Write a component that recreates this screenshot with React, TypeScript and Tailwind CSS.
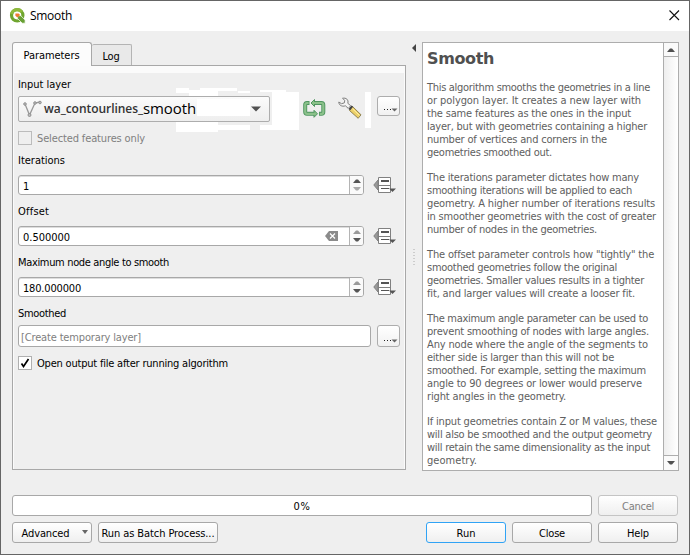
import React, { useLayoutEffect, useRef, useState } from "react";

const ui = "font-['DejaVu_Sans_Condensed','DejaVu_Sans',sans-serif]";

/* Spreads or tightens the letters of one line so that it takes the given width. */
function Fit({ text, width }: { text: string; width: number }) {
  const ref = useRef<HTMLSpanElement>(null);
  const [spacing, setSpacing] = useState(0);
  useLayoutEffect(() => {
    const el = ref.current;
    if (!el) return;
    el.style.letterSpacing = "0px";
    setSpacing((width - el.getBoundingClientRect().width) / text.length);
  }, [text, width]);
  return (
    <span ref={ref} className="inline-block whitespace-nowrap" style={{ letterSpacing: spacing + "px" }}>
      {text}
    </span>
  );
}

function Logo() {
  return (
    <svg width="18" height="18" viewBox="0 0 18 18" className="shrink-0">
      <circle cx="8.200" cy="8.300" r="5.700" fill="none" stroke="#6fa52f" strokeWidth="3.200" />
      <path d="M2.600 7A5.700 5.700 0 0 1 12.800 5" fill="none" stroke="#8fb93c" strokeWidth="3.200" />
      <path d="M8.600 8.700h3.200l4.300 4.300v3.200h-2.900L8.600 11.600z" fill="#68a034" stroke="#fff" strokeWidth=".7" />
      <path d="M6.400 6.400h3.200l1.500 1.500-2.700 2.700-2-1.800z" fill="#ef7b31" />
    </svg>
  );
}

function Arrow({ up = false, className = "" }: { up?: boolean; className?: string }) {
  return (
    <svg width="8" height="4" viewBox="0 0 8 4" className={"shrink-0 " + className} fill="currentColor">
      <path d={up ? "M0 4 3 .5h2L8 4z" : "M0 0h8L5 3.500H3z"} />
    </svg>
  );
}

function Spin({ value, width, clear = false, first = false }: { value: string; width: number; clear?: boolean; first?: boolean }) {
  return (
    <div className="flex h-[20px] shrink-0 items-center">
      <div className="flex h-[20px] w-[346px] shrink-0 overflow-hidden rounded-[3px] border border-[#a8a8a8] bg-white shadow-[inset_0_1px_0_#ddd]">
        <div className="flex-1 whitespace-nowrap pl-[4px] pt-px leading-[19px]"><Fit text={value} width={width} /></div>
        {clear && (
          <svg width="13" height="10" viewBox="0 0 13 10" className="mr-[11px] mt-[4px]">
            <path d="M0 5 4 0h9v10H4z" fill="#8b8b8b" />
            <path d="m5 2.500 5 5m0-5-5 5" stroke="#fff" strokeWidth="1.200" />
          </svg>
        )}
        <div className="flex w-[14px] flex-col items-center justify-center gap-[4px] border-l border-[#b4b4b4] bg-[#fafafa]">
          <Arrow up className={first ? "text-[#555]" : "text-[#999]"} />
          <Arrow className={first ? "text-[#aaa]" : "text-[#555]"} />
        </div>
      </div>
      <svg width="24" height="18" viewBox="0 0 24 18" className="ml-[9px]">
        <path d="M.8 9 5 4v10z" fill="#999" stroke="#808080" />
        <path d="M5.500 1.500h12v15h-12z" fill="#fff" stroke="#808080" />
        <path d="M6 9.500h11" stroke="#808080" />
        <path d="M8 5h8" stroke="#555" strokeWidth="2" />
        <path d="M8 12.500h8" stroke="#555" />
        <path d="M16 12.500h7L19.500 16z" fill="#555" />
      </svg>
    </div>
  );
}

function Dots({ className = "" }: { className?: string }) {
  return (
    <div className={"flex w-[23px] items-end justify-end rounded-[3px] border border-[#adadad] bg-gradient-to-b from-white to-[#f1f1f1] pb-[3px] pr-[1px] " + className}>
      <svg width="15" height="4" viewBox="0 0 15 4">
        <path d="M1 1h1v1H1zM4 1h1v1H4zM7 1h1v1H7z" fill="#222" />
        <path d="M8.500 .5h6l-3 3z" fill="#666" />
      </svg>
    </div>
  );
}

function Button({ children, className = "" }: { children: React.ReactNode; className?: string }) {
  return (
    <button className={"flex h-[21px] items-center justify-center whitespace-nowrap rounded-[3px] border bg-gradient-to-b from-white to-[#efefef] pt-px " + className}>
      {children}
    </button>
  );
}

const help: [string, number][][] = [
  [
    ["This algorithm smooths the geometries in a line", 223],
    ["or polygon layer. It creates a new layer with", 214],
    ["the same features as the ones in the input", 204],
    ["layer, but with geometries containing a higher", 220],
    ["number of vertices and corners in the", 180],
    ["geometries smoothed out.", 125],
  ],
  [
    ["The iterations parameter dictates how many", 212],
    ["smoothing iterations will be applied to each", 205],
    ["geometry. A higher number of iterations results", 228],
    ["in smoother geometries with the cost of greater", 229],
    ["number of nodes in the geometries.", 170],
  ],
  [
    ['The offset parameter controls how "tightly" the', 227],
    ["smoothed geometries follow the original", 190],
    ["geometries. Smaller values results in a tighter", 217],
    ["fit, and larger values will create a looser fit.", 208],
  ],
  [
    ["The maximum angle parameter can be used to", 221],
    ["prevent smoothing of nodes with large angles.", 222],
    ["Any node where the angle of the segments to", 221],
    ["either side is larger than this will not be", 187],
    ["smoothed. For example, setting the maximum", 219],
    ["angle to 90 degrees or lower would preserve", 215],
    ["right angles in the geometry.", 139],
  ],
  [
    ["If input geometries contain Z or M values, these", 230],
    ["will also be smoothed and the output geometry", 225],
    ["will retain the same dimensionality as the input", 223],
    ["geometry.", 50],
  ],
];

export default function App() {
  return (
    <div className={"relative flex h-[555px] w-[690px] flex-col overflow-hidden border border-[#656565] bg-[#efefef] text-[11px] leading-[13px] text-black " + ui}>
      <header className="flex h-[30px] shrink-0 items-center bg-white pl-[8px]">
        <Logo />
        <span className="ml-[3px] font-['Open_Sans',sans-serif] text-[12px] leading-[16px]"><Fit text="Smooth" width={42} /></span>
        <svg width="11" height="11" viewBox="0 0 11 11" className="mb-[2px] ml-auto mr-[9px]">
          <path d="m.5.500 9.500 9.500m0-9.500L.5 10" stroke="#111" strokeWidth="1.100" />
        </svg>
      </header>

      <main className="flex h-[439px] shrink-0 pl-[11px] pt-[11px]">
        <section className="flex w-[394px] shrink-0 flex-col">
          <div className="flex h-[23px] shrink-0 items-end">
            <div className="z-10 -mb-px flex h-[24px] w-[80px] items-center justify-center rounded-t-[3px] border border-b-0 border-[#a8a8a8] bg-[#fcfcfc] pr-px pt-[2px]"><Fit text="Parameters" width={56} /></div>
            <div className="flex h-[21px] w-[40px] items-center justify-center rounded-t-[2px] border border-b-0 border-l-0 border-[#b4b4b4] bg-[#e9e9e9] pr-px pt-[3px]"><Fit text="Log" width={17} /></div>
          </div>
          <div className="h-[405px] border border-[#a8a8a8]">
            <div className="h-[7px] bg-[#fbfbfb]" />
            <div className="flex h-[396px] flex-col border-x border-[#fbfbfb] px-[4px]">
              <div className="mt-[5px] h-[13px] shrink-0"><Fit text="Input layer" width={53} /></div>
              <div className="relative mt-[5px] flex h-[27px] shrink-0 items-start">
                <i className="absolute -top-[8px] left-[158px] h-[5px] w-[13px] bg-white" />
                <i className="absolute -top-[8px] left-[182px] h-[3px] w-[37px] bg-white" />
                <i className="absolute -top-[6px] left-[171px] h-[6px] w-[29px] bg-white" />
                <i className="absolute -top-[5px] left-[220px] h-[2px] w-[12px] bg-white" />
                <i className="absolute -top-[6px] left-[242px] h-[2px] w-[26px] bg-white" />
                <i className="absolute left-[158px] top-[26px] h-[10px] w-[42px] bg-white" />
                <i className="absolute left-[200px] top-[29px] h-[5px] w-[32px] bg-white" />
                <i className="absolute left-[242px] top-[29px] h-[5px] w-[14px] bg-white" />
                <i className="absolute -top-[4px] left-[254px] h-[38px] w-[27px] bg-white" />
                <i className="absolute -top-[4px] left-[347px] h-[36px] w-[6px] bg-white" />
                <div className="relative flex h-[26px] w-[252px] shrink-0 items-center rounded-[2px] border border-[#adadad] bg-gradient-to-b from-[#fbfbfb] to-[#eee]">
                  <i className="absolute left-[178px] top-[2px] h-[17px] w-[53px] bg-white" />
                  <svg width="20" height="18" viewBox="0 0 20 18" className="ml-[4px] shrink-0">
                    <path d="m2 4 4.500 11L12 3l5-1" fill="none" stroke="#999" strokeWidth="1.300" />
                    <g fill="#bbb" stroke="#8c8c8c" strokeWidth=".9"><circle cx="2" cy="4" r="1.300" /><circle cx="6.500" cy="15" r="1.500" /><circle cx="12" cy="3" r="1.300" /><circle cx="17" cy="2.500" r="1.300" /></g>
                  </svg>
                  <span className="relative ml-[1px] font-['Open_Sans',sans-serif] text-[12px] font-semibold leading-[22px] text-[#333]"><Fit text="wa_contourlines_" width={99} /></span>
                  <span className="relative pb-[2px] font-['Open_Sans',sans-serif] text-[15px] leading-[22px] text-black"><Fit text="smooth" width={53} /></span>
                  <svg width="10" height="6" viewBox="0 0 10 6" className="absolute right-[8px] top-[9px]"><path d="M0 .5h10L5 5.500z" fill="#505050" /></svg>
                </div>
                <svg width="25" height="22" viewBox="0 0 25 22" className="relative ml-[32px] mt-[2px]">
                  <g fill="none" stroke="#4f9560" strokeWidth="4">
                    <path d="M7.500 5H5Q3.200 5 3.200 6.800v7Q3.200 15.800 5 15.800h7" />
                    <path d="M17 15.800H19.500Q21.300 15.800 21.300 14V7Q21.300 5 19.500 5h-7" />
                  </g>
                  <path d="m12 12.300 3.500 3.500-3.500 3.500zM12.500 8.500 9 5l3.500-3.500z" fill="#88c087" stroke="#4f9560" />
                  <g fill="none" stroke="#8bc18a" strokeWidth="2.200">
                    <path d="M6.700 5H5Q3.200 5 3.200 6.800v7Q3.200 15.800 5 15.800h8" />
                    <path d="M17.800 15.800H19.500Q21.300 15.800 21.300 14V7Q21.300 5 19.500 5h-8" />
                  </g>
                </svg>
                <svg width="26" height="25" viewBox="0 0 26 25" className="relative ml-[10px]">
                  <path d="m13.500 12.500 2-2 8.500 8.300-2.800 3.500-8.700-7.800z" fill="#ecd069" stroke="#857748" strokeWidth=".9" />
                  <path d="m15.500 12.700 7 6.800" stroke="#fff0a8" />
                  <path d="m11.500 13 3-3.500 1.700 1.200-3 3.600z" fill="#444" />
                  <path d="M5.500 2.300c3.500-.9 6.400 1.500 5.300 5l2.900 2.400-2.400 2.700-2.900-2.600C5 11 1.800 9.200 1.800 6l2.700 1.700 2.800-.8.5-2.500z" fill="#f4f4f4" stroke="#808080" />
                </svg>
                <Dots className="absolute left-[359px] top-0 h-[20px]" />
              </div>
              <div className="mt-[7px] flex h-[15px] shrink-0 items-center text-[#808080]">
                <span className="mr-[5px] h-[14px] w-[14px] border border-[#bcbcbc]" /><span className="pt-px"><Fit text="Selected features only" width={108} /></span>
              </div>
              <div className="mb-[8px] mt-[9px] h-[13px] shrink-0"><Fit text="Iterations" width={47} /></div>
              <Spin value="1" width={7} first />
              <div className="mb-[8px] mt-[10px] h-[13px] shrink-0"><Fit text="Offset" width={31} /></div>
              <Spin value="0.500000" width={47} clear />
              <div className="mb-[8px] mt-[10px] h-[13px] shrink-0"><Fit text="Maximum node angle to smooth" width={151} /></div>
              <Spin value="180.000000" width={58} />
              <div className="mb-[5px] mt-[10px] h-[13px] shrink-0"><Fit text="Smoothed" width={48} /></div>
              <div className="flex h-[22px] shrink-0 gap-[6px]">
                <div className="h-[22px] w-[353px] rounded-[3px] border border-[#a8a8a8] bg-white pl-[2px] pt-px leading-[21px] text-[#808080]"><Fit text="[Create temporary layer]" width={120} /></div>
                <Dots className="h-[22px]" />
              </div>
              <div className="mt-[8px] flex h-[15px] shrink-0 items-center">
                <span className="mr-[5px] flex h-[14px] w-[14px] items-center justify-center border border-[#b0b0b0] bg-white">
                  <svg width="10" height="10" viewBox="0 0 10 10"><path d="m1.500 5.500 2 3L8.500 1" fill="none" stroke="#000" strokeWidth="1.700" /></svg>
                </span>
                <span className="pt-px"><Fit text="Open output file after running algorithm" width={191} /></span>
              </div>
            </div>
          </div>
        </section>

        <div className="flex w-[16px] shrink-0 flex-col items-center">
          <svg width="4" height="8" viewBox="0 0 4 8" className="mt-[2px]"><path d="M4 0v8L0 4z" fill="#444" /></svg>
          <svg width="2" height="17" viewBox="0 0 2 17" className="mt-[197px]"><path d="M1 0v17" stroke="#aaa" strokeDasharray="1 2" /></svg>
        </div>

        <section className="flex h-[429px] w-[257px] border border-[#adadad] bg-white">
          <article className="w-[240px] shrink-0 pl-[4px] pt-[5px] text-[#606060]">
            <h1 className="h-[33px] font-['DejaVu_Sans',sans-serif] text-[16px] font-bold leading-[21px] text-[#505050]"><Fit text="Smooth" width={67} /></h1>
            {help.map((p, i) => (
              <p key={i} className="mb-[12px]">
                {p.map(([line, w]) => (
                  <span key={line} className="block h-[13px]"><Fit text={line} width={w} /></span>
                ))}
              </p>
            ))}
          </article>
          <div className="flex w-[15px] flex-col border-l border-[#adadad] bg-gradient-to-r from-[#eee] to-white">
            <div className="flex h-[14px] items-center justify-center border-b border-[#adadad] bg-[#fafafa] text-[#505050]"><Arrow up /></div>
            <div className="flex-1" />
            <div className="flex h-[15px] items-center justify-center border-t border-[#adadad] bg-[#fafafa] text-[#505050]"><Arrow /></div>
          </div>
        </section>
      </main>

      <footer className="mt-[25px] flex flex-col gap-[6px] px-[11px]">
        <div className="flex gap-[6px]">
          <div className="flex h-[21px] w-[580px] items-center justify-center rounded-[3px] border border-[#a8a8a8] bg-white pt-px"><Fit text="0%" width={17} /></div>
          <Button className="w-[80px] border-[#c4c4c4] text-[#808080]"><Fit text="Cancel" width={32} /></Button>
        </div>
        <div className="flex gap-[6px]">
          <Button className="w-[80px] gap-[12px] border-[#a8a8a8] pl-[5px]"><Fit text="Advanced" width={48} /> <svg width="6" height="4" viewBox="0 0 6 4" className="mb-[2px]"><path d="M0 0h6L3 4z" fill="#666" /></svg></Button>
          <Button className="w-[120px] border-[#a8a8a8]"><Fit text="Run as Batch Process..." width={113} /></Button>
          <Button className="ml-auto w-[80px] border-[#30a3f5] to-[#e3e8ed]"><Fit text="Run" width={19} /></Button>
          <Button className="w-[80px] border-[#a8a8a8]"><Fit text="Close" width={26} /></Button>
          <Button className="w-[80px] border-[#a8a8a8]"><Fit text="Help" width={22} /></Button>
        </div>
      </footer>
    </div>
  );
}
